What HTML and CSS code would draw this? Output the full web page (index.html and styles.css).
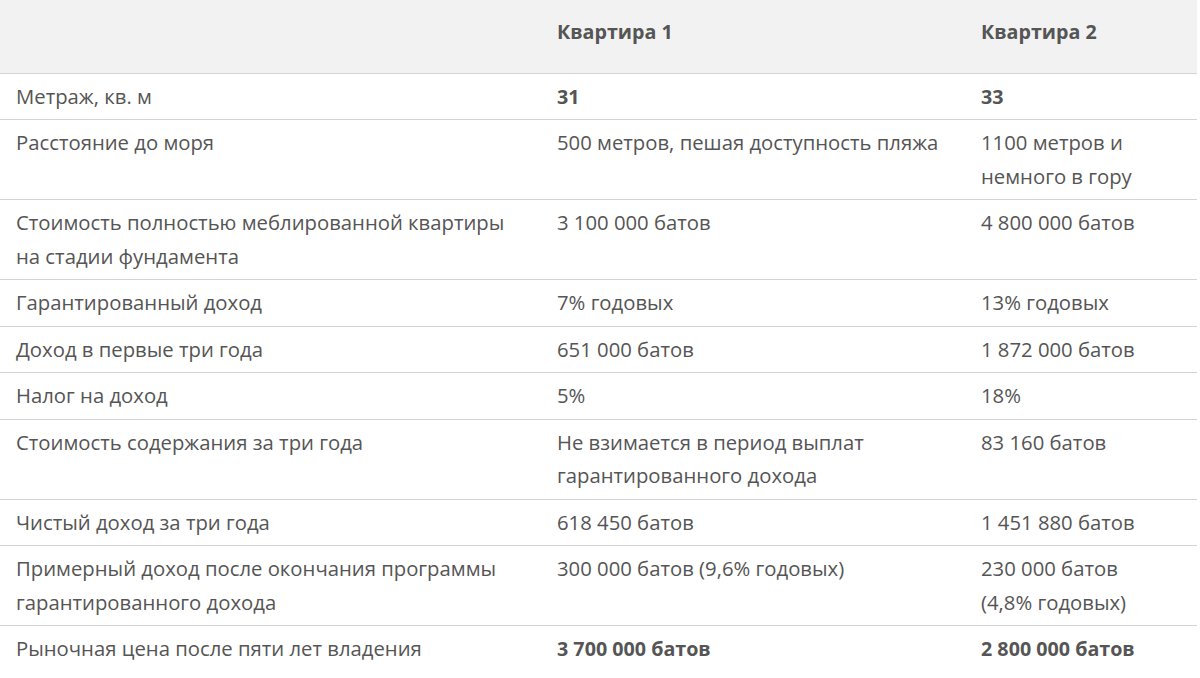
FILE: index.html
```html
<!DOCTYPE html>
<html lang="ru">
<head>
<meta charset="utf-8">
<link rel="stylesheet" href="styles.css">
</head>
<body>
<table class="cmp">
  <colgroup>
    <col class="c1">
    <col class="c2">
    <col class="c3">
  </colgroup>
  <thead>
    <tr><th></th><th>Квартира 1</th><th>Квартира 2</th></tr>
  </thead>
  <tbody>
    <tr><td>Метраж, кв. м</td><td class="b">31</td><td class="b">33</td></tr>
    <tr><td>Расстояние до моря</td><td>500 метров, пешая доступность пляжа</td><td>1100 метров и<br>немного в гору</td></tr>
    <tr><td>Стоимость полностью меблированной квартиры<br>на стадии фундамента</td><td>3 100 000 батов</td><td>4 800 000 батов</td></tr>
    <tr><td>Гарантированный доход</td><td>7% годовых</td><td>13% годовых</td></tr>
    <tr><td>Доход в первые три года</td><td>651 000 батов</td><td>1 872 000 батов</td></tr>
    <tr><td>Налог на доход</td><td>5%</td><td>18%</td></tr>
    <tr><td>Стоимость содержания за три года</td><td>Не взимается в период выплат<br>гарантированного дохода</td><td>83 160 батов</td></tr>
    <tr><td>Чистый доход за три года</td><td>618 450 батов</td><td>1 451 880 батов</td></tr>
    <tr><td>Примерный доход после окончания программы<br>гарантированного дохода</td><td>300 000 батов (9,6% годовых)</td><td>230 000 батов<br>(4,8% годовых)</td></tr>
    <tr><td>Рыночная цена после пяти лет владения</td><td class="b">3 700 000 батов</td><td class="b">2 800 000 батов</td></tr>
  </tbody>
</table>
</body>
</html>
```

FILE: styles.css
```css
html, body {
  margin: 0;
  padding: 0;
  background: #ffffff;
}

.cmp {
  width: 1197px;
  border-collapse: collapse;
  table-layout: fixed;
  font-family: "Open Sans", "Noto Sans", sans-serif;
  font-size: 20.3px;
  line-height: 33.5px;
  color: #555555;
}

.c1 { width: 541px; }
.c2 { width: 424px; }
.c3 { width: 232px; }

.cmp th {
  background: #f2f2f2;
  font-size: 19.7px;
  font-weight: 700;
  text-align: left;
  padding: 15px 16px 24px;
  border-bottom: 1px solid #d4d4d4;
  white-space: nowrap;
}

.cmp td {
  padding: 6px 16px 6px;
  vertical-align: top;
  text-align: left;
  border-bottom: 1px solid #d4d4d4;
  white-space: nowrap;
}

.cmp tbody tr:last-child td {
  border-bottom: none;
}

.cmp td.b {
  font-size: 19.7px;
  font-weight: 700;
}
```
